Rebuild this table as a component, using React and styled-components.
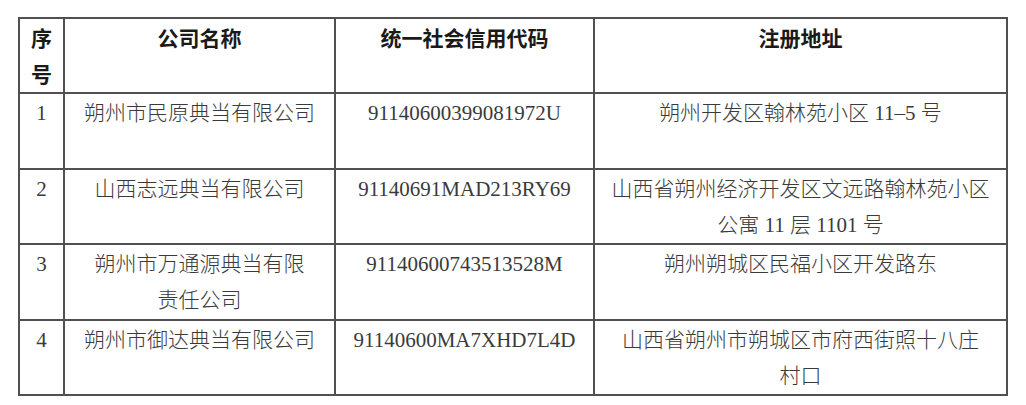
import React from 'react'
import styled, { createGlobalStyle } from 'styled-components'

const GlobalStyle = createGlobalStyle`
  html, body {
    margin: 0;
    padding: 0;
    background: #ffffff;
  }
`

const companies = [
  {
    no: '1',
    name: ['朔州市民原典当有限公司'],
    code: '91140600399081972U',
    address: ['朔州开发区翰林苑小区 11–5 号'],
  },
  {
    no: '2',
    name: ['山西志远典当有限公司'],
    code: '91140691MAD213RY69',
    address: ['山西省朔州经济开发区文远路翰林苑小区', '公寓 11 层 1101 号'],
  },
  {
    no: '3',
    name: ['朔州市万通源典当有限', '责任公司'],
    code: '91140600743513528M',
    address: ['朔州朔城区民福小区开发路东'],
  },
  {
    no: '4',
    name: ['朔州市御达典当有限公司'],
    code: '91140600MA7XHD7L4D',
    address: ['山西省朔州市朔城区市府西街照十八庄', '村口'],
  },
]

const Lines = ({ lines }) =>
  lines.map((line, i) => (
    <React.Fragment key={i}>
      {i > 0 && <br />}
      {line}
    </React.Fragment>
  ))

const App = () => {
  return (
    <>
      <GlobalStyle />
      <Page>
        <Table>
          <colgroup>
            <Col $w={45} />
            <Col $w={271} />
            <Col $w={259} />
            <Col $w={413} />
          </colgroup>
          <thead>
            <Row>
              <Th>序<br />号</Th>
              <Th>公司名称</Th>
              <Th>统一社会信用代码</Th>
              <Th>注册地址</Th>
            </Row>
          </thead>
          <tbody>
            {companies.map((c) => (
              <Row key={c.no}>
                <Td>{c.no}</Td>
                <Td><Lines lines={c.name} /></Td>
                <Td>{c.code}</Td>
                <Td><Lines lines={c.address} /></Td>
              </Row>
            ))}
          </tbody>
        </Table>
      </Page>
    </>
  )
}

const Page = styled.div`
  padding: 17px 0 0 18px;
`

const Table = styled.table`
  width: 988px;
  table-layout: fixed;
  border-collapse: collapse;
  border: 2px solid #505050;
`

const Col = styled.col`
  width: ${(p) => p.$w}px;
`

const Row = styled.tr`
  height: 75.4px;
`

const Th = styled.th`
  border: 2px solid #505050;
  padding: 0 2px;
  vertical-align: top;
  text-align: center;
  font-family: "Noto Sans CJK SC", "Liberation Sans", sans-serif;
  font-weight: 700;
  font-size: 21px;
  line-height: 36px;
  color: #1a1a1a;
`

const Td = styled.td`
  border: 2px solid #505050;
  padding: 1px 2px 0;
  vertical-align: top;
  text-align: center;
  font-family: "Liberation Serif", "Noto Sans CJK SC", serif;
  font-weight: 300;
  font-size: 21px;
  line-height: 36px;
  color: #3a3a3a;
`

export default App
